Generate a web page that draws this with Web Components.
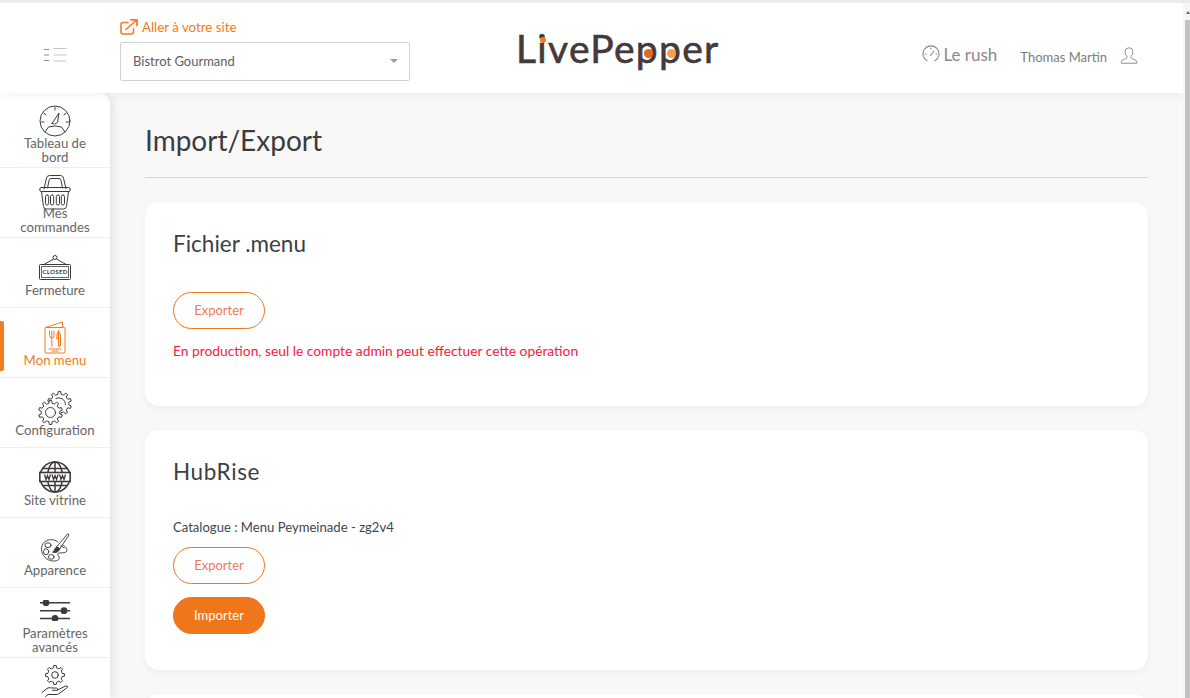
<!DOCTYPE html>
<html lang="fr"><head><meta charset="utf-8"><title>Import/Export</title>
<style>
html,body{margin:0;height:698px;overflow:hidden;background:#f8f8f8;font-family:Lato,"Open Sans",sans-serif;color:#3c3c3c}
</style></head><body>
<lp-app>
  <lp-header slot="header"></lp-header>
  <lp-sidebar slot="side"></lp-sidebar>
  <h-page slot="main" title="Import/Export">
    <lp-card heading="Fichier .menu" style="height:204px;--hs:22.5px">
      <lp-btn style="margin-top:33px">Exporter</lp-btn>
      <p style="margin:13px 0 0;font-size:13.8px;line-height:18px;color:#f5203f">En production, seul le compte admin peut effectuer cette opération</p>
    </lp-card>
    <lp-card heading="HubRise" style="height:240px;--hs:22.5px;--ls:.6px">
      <p style="margin:31px 0 0;font-size:13.1px;line-height:18px;color:#3d4450">Catalogue : Menu Peymeinade - zg2v4</p>
      <lp-btn style="margin-top:11px">Exporter</lp-btn>
      <lp-btn primary style="margin-top:13px">Importer</lp-btn>
    </lp-card>
    <lp-card style="height:60px"></lp-card>
  </h-page>
</lp-app>
<script>
function gear(cx,cy,ro,ri,n){
  let d='';const step=Math.PI*2/n;
  for(let i=0;i<n;i++){
    const a=i*step-Math.PI/2;
    const pts=[[ri,a-step*.5],[ri,a-step*.27],[ro,a-step*.17],[ro,a+step*.17],[ri,a+step*.27]];
    pts.forEach((p,j)=>{
      const x=(cx+p[0]*Math.cos(p[1])).toFixed(2),y=(cy+p[0]*Math.sin(p[1])).toFixed(2);
      d+=(i==0&&j==0?'M':'L')+x+' '+y;
    });
  }
  return d+'Z';
}
const S='fill="none" stroke="currentColor" stroke-width="1" stroke-linecap="round" stroke-linejoin="round"';
const ICONS={
gauge:`<svg width="32" height="32" viewBox="0 0 32 32" ${S}><circle cx="16" cy="16" r="15"/><path d="M6 27 9.500 22Q16 20 22.500 22L26 27"/><path d="M13 18.500 20 8 18.500 17.500Q15.500 20.500 13 18.500Z"/><path d="M16 2.500V5M5 8.500l2 1.300M27 8.500l-2 1.300M2.500 17H5M29.500 17H27"/></svg>`,
basket:`<svg width="32" height="36" viewBox="0 0 32 36" ${S}><path d="M5 15 7.500 4Q8 1.500 10.500 1.500H21.500Q24 1.500 24.500 4L27 15"/><path d="M8.500 14 10 6.500Q10.300 4.500 12 4.500H20Q21.700 4.500 22 6.500L23.500 14"/><rect x=".8" y="13.500" width="30.400" height="4" rx="1.500"/><path d="M2.500 17.500 4.500 32.500Q4.800 35 7.500 35H24.500Q27.200 35 27.500 32.500L29.500 17.500"/><rect x="6.500" y="21" width="3.200" height="10" rx="1.600"/><rect x="11.500" y="21" width="3.200" height="10" rx="1.600"/><rect x="17.300" y="21" width="3.200" height="10" rx="1.600"/><rect x="22.300" y="21" width="3.200" height="10" rx="1.600"/></svg>`,
closed:`<svg width="32" height="25" viewBox="0 0 32 25" fill="none" stroke="currentColor" stroke-linejoin="round"><circle cx="16" cy="2.500" r="2"/><path d="M14.500 4 4 10M17.500 4 28 10"/><rect x=".5" y="9.500" width="31" height="15" rx="1"/><rect x="2.500" y="11.500" width="27" height="11" stroke-width=".8"/><text x="16" y="19.400" text-anchor="middle" font-family="Lato,sans-serif" font-size="6" font-weight="700" fill="currentColor" stroke="none" letter-spacing=".35">CLOSED</text></svg>`,
menu:`<svg width="22" height="33" viewBox="0 0 22 33" ${S} stroke-width="1.100"><path d="M1.500 6.500 18.500 1V6.500"/><rect x="1" y="6.500" width="20" height="25.500" rx="1"/><path d="M5.500 10V14.500Q5.500 17 7.800 17 10 17 10 14.500V10M7.800 10V25.500"/><path d="M14.500 10Q12.200 13 12.800 18H14.500M14.500 10V25.500Q16.500 25.500 16.500 24V15Q16.500 11.500 14.500 10Z" fill="currentColor" fill-opacity=".25"/><path d="M5 28H17M8 30H14"/></svg>`,
config:`<svg width="34" height="34" viewBox="0 0 34 34" ${S}><path d="${gear(21.5,12.5,12,9.300,10)}"/><path d="M18 7.500A6.500 6.500 0 0 1 27.500 13.500"/><path d="${gear(12.500,21.500,12,9.300,10)}" fill="#fff"/><circle cx="12.500" cy="21.500" r="5"/></svg>`,
www:`<svg width="32" height="32" viewBox="0 0 32 32" fill="none" stroke="currentColor" stroke-width="1.500"><circle cx="16" cy="16" r="15"/><ellipse cx="16" cy="16" rx="7.500" ry="15"/><path d="M16 1V31M4 7.500H28M4 24.500H28"/><rect x="0.800" y="11.500" width="30.400" height="9" fill="#fff" stroke-width="1.600"/><path d="M4 13.500 5.500 18.500 7 14.500 8.500 18.500 10 13.500M11.500 13.500 13 18.500 14.500 14.500 16 18.500 17.500 13.500M19 13.500 20.500 18.500 22 14.500 23.500 18.500 25 13.500" transform="translate(1.500 0)" stroke-width="1.300"/></svg>`,
palette:`<svg width="30" height="30" viewBox="0 0 32 32" ${S}><path d="M19 9.500C15 6 7 6 3.500 11 -.5 16.500 2 23.500 7 27.500 12 31 20 30.500 20.500 27 21 24.500 18 24 19 22 20 20.500 27 22 28.500 19.500 29.500 17 27 14 24.500 13"/><ellipse cx="8.500" cy="13" rx="3.300" ry="2.600"/><ellipse cx="6.500" cy="20" rx="2.800" ry="3.200"/><ellipse cx="12" cy="25.500" rx="3" ry="2.500"/><path d="M30 1 31 2 21 17 18 15Z"/><path d="M18 15C15.500 15.500 16 19 13.500 20.500 17 21.500 20.500 20 21 17Z" fill="currentColor"/><path d="M22 13.500 26 16"/></svg>`,
sliders:`<svg width="32" height="21" viewBox="0 0 32 21" fill="none" stroke="currentColor" stroke-width="1.500"><path d="M1 2.700H31M1 10.700H31M1 18.400H31"/><circle cx="7" cy="2.700" r="2.600" fill="currentColor"/><circle cx="25" cy="10.700" r="2.600" fill="currentColor"/><circle cx="16" cy="18.400" r="2.600" fill="currentColor"/></svg>`,
hand:`<svg width="28" height="32" viewBox="0 0 28 32" ${S}><path d="${gear(14,10,9.500,7.300,8)}"/><circle cx="14" cy="10" r="3.300"/><path d="M1 27.500 6 23.500Q8 22 10.500 23H15.500Q17.500 23.500 16.500 25.300H11.500M16.500 25 24.500 21Q27 20.300 26.500 22.300L17.500 29Q16.500 29.500 15 29.500H7L4.500 31.500" fill="#fff"/></svg>`
};
function def(name,html){customElements.define(name,class extends HTMLElement{
  constructor(){super();this.attachShadow({mode:'open'});}
  connectedCallback(){this.shadowRoot.innerHTML=typeof html==='function'?html(this):html;}
});}

def('lp-app',`<style>
:host{display:grid;grid-template-columns:1fr 7px;height:698px;overflow:hidden;border-top:3px solid #ececec;box-sizing:border-box}
.app{display:grid;grid-template-columns:110px 1fr;grid-template-rows:90px 1fr;min-width:0;height:695px;overflow:hidden}
.h{grid-column:1/3;position:relative;z-index:2;box-shadow:0 2px 10px rgba(0,0,0,.05)}
.bar{background:#f6f6f6;position:relative;padding-top:17px;box-sizing:border-box}
.bar i{display:block;height:100%;background:#c1c1c1;margin-left:2px}
.bar b{position:absolute;left:3px;top:8px;width:0;height:0;border:2px solid transparent;border-bottom:3px solid #666;border-top:0}
</style>
<div class="app"><div class="h"><slot name="header"></slot></div><slot name="side"></slot><slot name="main"></slot></div>
<div class="bar"><b></b><i></i></div>`);

def('lp-header',`<style>
:host{display:flex;align-items:flex-start;height:90px;background:#fff;position:relative;box-sizing:border-box}
.burger{width:120px;flex:none;padding:45px 0 0 44px;box-sizing:border-box;height:90px}
.site{width:290px;flex:none;padding-top:15px}
.go{display:flex;align-items:center;gap:4px;color:#f47b20;font-size:13.3px;line-height:18px;height:18px}
.sel{margin-top:6px;height:39px;border:1px solid #d2d2d2;border-radius:2px;display:flex;align-items:center;justify-content:space-between;padding:0 11px 1px 12px;font-size:13px;color:#5e5e5e;box-sizing:border-box;background:#fff}
.sel b{width:0;height:0;border:4.5px solid transparent;border-top:4.5px solid #999;border-bottom:0}
.logo{flex:none;margin-left:106px;margin-top:20px;width:204px}
.right{margin-left:auto;display:flex;align-items:center;color:#777;height:24px;margin-top:40px;padding-right:45px}
.rush{display:flex;align-items:center;gap:3px;font-size:17px;color:#8a8a8a;margin-right:23px;margin-top:-2px}
.user{font-size:13px;color:#7c7c7c;margin-right:13px;margin-top:3px}
svg{display:block}
</style>
<div class="burger"><svg width="24" height="14" viewBox="0 0 24 14" fill="none" stroke="#8c8c8c"><path d="M0 1.500H5M0 7H5M0 12.500H5" stroke-width="1"/><path d="M9.500 .5H22.500M9.500 7H22.500M9.500 13H22.500" stroke="#c4c4c4"/></svg></div>
<div class="site">
  <div class="go"><svg width="18" height="16" viewBox="0 0 18 16" fill="none" stroke="#f47b20" stroke-width="1.600" stroke-linecap="round" stroke-linejoin="round"><path d="M13.500 9.500V13Q13.500 15 11.500 15H3Q1 15 1 13V5.500Q1 3.500 3 3.500H8"/><path d="M6 10.500 16 1.500"/><path d="M11 .8H17V6.500" stroke-width="1.800"/></svg>Aller à votre site</div>
  <div class="sel"><span>Bistrot Gourmand</span><b></b></div>
</div>
<lp-logo class="logo"></lp-logo>
<div class="right">
 <div class="rush"><svg width="18" height="18" viewBox="0 0 18 18" fill="none" stroke="#8a8a8a" stroke-width="1.100" stroke-linecap="round"><path d="M5 15.800A8 8 0 1 1 13 15.800"/><path d="M8.500 10.500 12 6M9 3V4M3 9H4M14 9H15"/></svg><span>Le rush</span></div>
 <div class="user">Thomas Martin</div>
 <svg width="18" height="17" viewBox="0 0 18 18" fill="none" stroke="#8a8a8a" stroke-width="1"><path d="M.8 17.200H17.200V15.500Q17 13.800 14 13L11.500 12Q10.800 11 11 10.200 13.200 8 13.200 5 13 .8 9 .8 5 .8 4.800 5 4.800 8 7 10.200 7.200 11 6.500 12L4 13Q1 13.800.8 15.500Z"/></svg>
</div>`);

def('lp-logo',`<style>
:host{display:block;height:50px}
.t{font-family:Lato,sans-serif;font-size:39px;line-height:50px;color:#45393a;letter-spacing:1.3px;white-space:nowrap;-webkit-text-stroke:.6px #45393a}
span{display:inline-block;position:relative;height:50px}
span::after{content:"";position:absolute;border-radius:50%}
.i::after{left:2.500px;top:14px;width:6px;height:6px;background:#f47b20}
.p::after{left:8.500px;top:25.500px;width:9px;height:9px;background:#e9661a}
.q::after{left:8.500px;top:25.500px;width:9px;height:9px;background:#f7a04b}
</style><div class="t">L<span class="i">i</span>vePe<span class="p">p</span><span class="q">p</span>er</div>`);

const NAV=[['gauge','Tableau de<br>bord',0,-1],['basket','Mes<br>commandes',0,-4],['closed','Fermeture',0,3],['menu','Mon menu',1,-1],['config','Configuration',0,-2],['www','Site vitrine',0,0],['palette','Apparence',0,0],['sliders','Paramètres<br>avancés',0,5],['hand','',0,20]];
def('lp-sidebar',()=>`<style>
:host{display:block;background:#fff;border-top-right-radius:10px;box-shadow:3px 0 10px rgba(0,0,0,.09);position:relative;z-index:1;height:605px;overflow:hidden}
.list{padding-top:5px}
</style><div class="list">${NAV.map(n=>`<lp-nav icon="${n[0]}" ${n[2]?'active':''} ${n[1].includes('<br>')?'two':''} style="--m:${n[3]}px">${n[1]}</lp-nav>`).join('')}</div>`);

def('lp-nav',h=>`<style>
:host{display:flex;flex-direction:column;align-items:center;justify-content:flex-end;height:70px;box-sizing:border-box;border-bottom:1px solid #eee;position:relative;color:#666;text-align:center;font-size:13.2px;line-height:14px;padding-bottom:10px}
:host([two]){padding-bottom:3px}
:host([active]){color:#f47b20}
:host(:not([active])) .ic{color:#3f3a3a}
.ic{display:flex;justify-content:center;margin-bottom:var(--m,0)}
svg{display:block}
.mark{position:absolute;left:0;top:13px;width:4px;height:50px;background:#f47b20;border-radius:0 2px 2px 0}
</style>${h.hasAttribute('active')?'<i class="mark"></i>':''}<div class="ic">${ICONS[h.getAttribute('icon')]}</div><div><slot></slot></div>`);

def('h-page',h=>`<style>
:host{display:block;padding:0 35px;min-width:0;overflow:hidden;height:605px;box-sizing:border-box}
h1{margin:0;font-weight:400;font-size:28px;line-height:38px;padding-top:28px;padding-bottom:18px;border-bottom:1px solid #d8d8d8;color:#3c3c3c}
.c{display:flex;flex-direction:column;gap:24px;margin-top:24px}
</style><h1>${h.getAttribute('title')}</h1><div class="c"><slot></slot></div>`);

def('lp-card',h=>`<style>
:host{display:block;flex:none;background:#fff;border-radius:14px;box-shadow:0 2px 6px rgba(0,0,0,.05);padding:27px 28px 0;box-sizing:border-box}
h2{margin:0;font-weight:400;font-size:var(--hs,21px);letter-spacing:var(--ls,0);line-height:30px;color:#3c3f46}
h2:empty{display:none}
</style><h2>${h.getAttribute('heading')||''}</h2><slot></slot>`);

def('lp-btn',`<style>
:host{display:flex;align-items:center;justify-content:center;width:92px;height:37px;box-sizing:border-box;border-radius:19px;border:1px solid #f0761b;color:#f47a55;font-size:13px;background:#fff;padding-bottom:2px}
:host([primary]){background:#f0761b;color:#fff}
</style><slot></slot>`);
</script>
</body></html>
